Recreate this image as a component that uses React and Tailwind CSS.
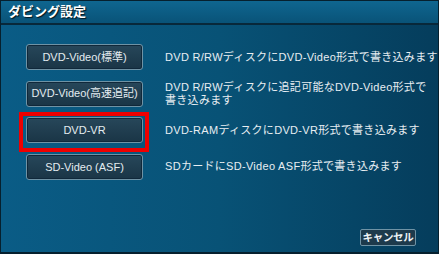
const FONT = { fontFamily: '"Liberation Sans", "Noto Sans CJK JP", sans-serif' };

const rows = [
  { label: "DVD-Video(標準)", desc: ["DVD R/RWディスクにDVD-Video形式で書き込みます"] },
  { label: "DVD-Video(高速追記)", desc: ["DVD R/RWディスクに追記可能なDVD-Video形式で", "書き込みます"] },
  { label: "DVD-VR", desc: ["DVD-RAMディスクにDVD-VR形式で書き込みます"], marked: true },
  { label: "SD-Video (ASF)", desc: ["SDカードにSD-Video ASF形式で書き込みます"] },
];

function OptionButton({ label }) {
  return (
    <div className="w-[117px] h-[26px] shrink-0 flex items-center justify-center whitespace-nowrap rounded-[3px] border border-[#6f93a5] bg-gradient-to-b from-[#27475a] to-[#1a3546] text-[11px] text-[#e4ecf0] shadow-[inset_0_0_0_1px_#10283a]">
      {label}
    </div>
  );
}

export default function App() {
  return (
    <div
      className="w-[439px] h-[254px] flex flex-col border border-[#06202e] border-b-2 bg-gradient-to-r from-[#0a5c86] via-[#085276] to-[#053d5c] overflow-hidden"
      style={FONT}
    >
      <div className="h-[24px] shrink-0 flex items-center pl-[7px] border-b-2 border-[#08283a] bg-gradient-to-b from-[#0f6690] to-[#095378]">
        <span className="text-[13px] font-bold text-white [text-shadow:1px_1px_1px_#02141e]">
          ダビング設定
        </span>
      </div>

      <div className="flex-1 flex flex-col pl-[25px] pt-[19px] pr-[22px] pb-[6px]">
        <div className="flex flex-col gap-[10.67px]">
          {rows.map((r) => (
            <div key={r.label} className="relative flex items-center gap-[22px]">
              <OptionButton label={r.label} />
              <div className="text-[11px] leading-[13px] text-[#e8eef2] whitespace-nowrap tracking-[0.3px]">
                {r.desc.map((line) => (
                  <div key={line}>{line}</div>
                ))}
              </div>
              {r.marked && (
                <div className="absolute left-[-7px] top-[-5px] w-[130px] h-[40px] border-4 border-[#ee0000]" />
              )}
            </div>
          ))}
        </div>

        <div className="mt-auto flex justify-end">
          <div className="w-[56px] h-[17px] flex items-center justify-center whitespace-nowrap rounded-[2px] border border-[#6f93a5] bg-[#1d3a4c] text-[10.5px] font-semibold tracking-[-0.3px] text-[#eef3f6]">
            キャンセル
          </div>
        </div>
      </div>
    </div>
  );
}
